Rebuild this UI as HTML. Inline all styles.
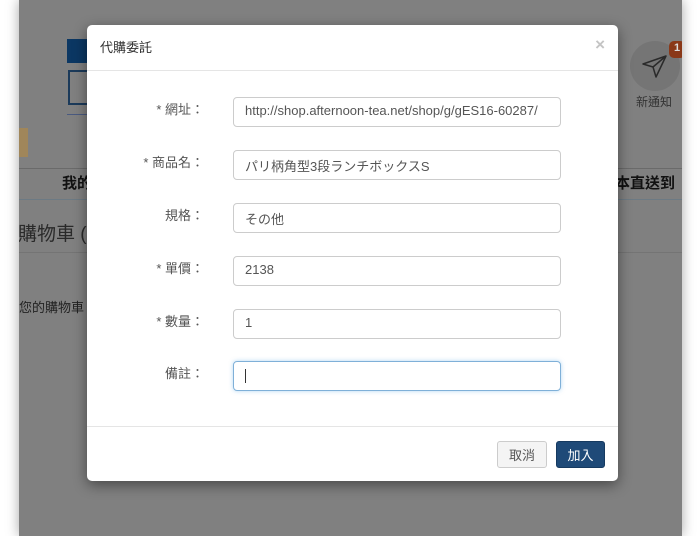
<!DOCTYPE html>
<html><head><meta charset="utf-8"><style>
*{margin:0;padding:0;box-sizing:border-box}
body{width:700px;height:536px;background:#fff;position:relative;overflow:hidden;font-family:"Liberation Sans","Noto Sans CJK TC",sans-serif}
.pg{position:absolute;left:19px;top:0;width:663px;height:536px;background:#808080;box-shadow:0 0 12px rgba(0,0,0,.35);overflow:hidden}
.a{position:absolute}
.modal{position:absolute;left:87px;top:25px;width:531px;height:456px;background:#fff;border-radius:5px;box-shadow:0 4px 14px rgba(0,0,0,.45)}
.hd{position:absolute;left:0;top:0;width:100%;height:46px;border-bottom:1px solid #e5e5e5;font-size:13px;color:#333;padding:12px 0 0 13px}
.x{position:absolute;right:13px;top:10px;font-size:17px;color:#c4c4c4;font-weight:bold}
.lb{position:absolute;left:0;width:117px;text-align:right;font-size:13px;color:#555}
.in{position:absolute;left:146px;width:328px;height:30px;border:1px solid #ccc;border-radius:4px;font-size:13px;color:#555;padding:5px 11px 0}
.ft{position:absolute;left:0;top:401px;width:100%;border-top:1px solid #e5e5e5}
.b{position:absolute;top:416px;height:27px;border-radius:3px;font-size:13px;text-align:center;padding-top:3px}
</style></head><body>
<div class="pg">
 <div class="a" style="left:48px;top:39px;width:30px;height:24px;background:#0b3763"></div>
 <div class="a" style="left:49px;top:70px;width:30px;height:35px;border:2px solid #1b3a5a"></div>
 <div class="a" style="left:48px;top:114px;width:20px;height:1px;background:#4a5a80"></div>
 <div class="a" style="left:-19px;top:128px;width:28px;height:29px;background:#a0865a"></div>
 <div class="a" style="left:0;top:168px;width:663px;height:1px;background:#6a6a6a"></div>
 <div class="a" style="left:0;top:199px;width:663px;height:1px;background:#6c7a84"></div>
 <div class="a" style="left:43px;top:172px;font-size:15px;font-weight:bold;color:#111">我的</div>
 <div class="a" style="left:596px;top:172px;font-size:15px;font-weight:bold;color:#111">本直送到</div>
 <div class="a" style="left:-1px;top:219px;font-size:19px;color:#2a2a2a">購物車 (</div>
 <div class="a" style="left:0;top:252px;width:663px;height:1px;background:#747474"></div>
 <div class="a" style="left:0;top:297px;font-size:13px;color:#222">您的購物車</div>
 <div class="a" style="left:611px;top:41px;width:50px;height:50px;border-radius:50%;background:#757575"></div>
 <svg class="a" style="left:621px;top:52px" width="30" height="28" viewBox="0 0 30 28"><path d="M3 12 L26 4 L16 25 L13 15 Z M13 15 L26 4" fill="none" stroke="#2a2a2a" stroke-width="1.5" stroke-linejoin="round"/></svg>
 <div class="a" style="left:650px;top:41px;width:16px;height:17px;border-radius:5px;background:#8a3818;color:#ddd;font-size:11px;font-weight:bold;padding:1px 0 0 5px">1</div>
 <div class="a" style="left:617px;top:93px;font-size:12px;color:#333">新通知</div>
</div>
<div class="modal">
 <div class="hd">代購委託</div><div class="x">×</div>
 <div class="lb" style="top:74px">* 網址：</div><div class="in" style="top:72px">http://shop.afternoon-tea.net/shop/g/gES16-60287/</div>
 <div class="lb" style="top:127px">* 商品名：</div><div class="in" style="top:125px">パリ柄角型3段ランチボックスS</div>
 <div class="lb" style="top:180px">規格：</div><div class="in" style="top:178px">その他</div>
 <div class="lb" style="top:233px">* 單價：</div><div class="in" style="top:231px">2138</div>
 <div class="lb" style="top:286px">* 數量：</div><div class="in" style="top:284px">1</div>
 <div class="lb" style="top:338px">備註：</div><div class="in" style="top:336px;border-color:#7fb0d8;box-shadow:0 0 4px rgba(102,175,233,.5);padding-top:7px"><span style="display:inline-block;width:1px;height:14px;background:#333"></span></div>
 <div class="ft"></div>
 <div class="b" style="left:410px;width:50px;border:1px solid #ccc;background:#f4f4f4;color:#555">取消</div>
 <div class="b" style="left:469px;width:49px;background:#1f4a78;border:1px solid #163a60;color:#fff">加入</div>
</div>
</body></html>
